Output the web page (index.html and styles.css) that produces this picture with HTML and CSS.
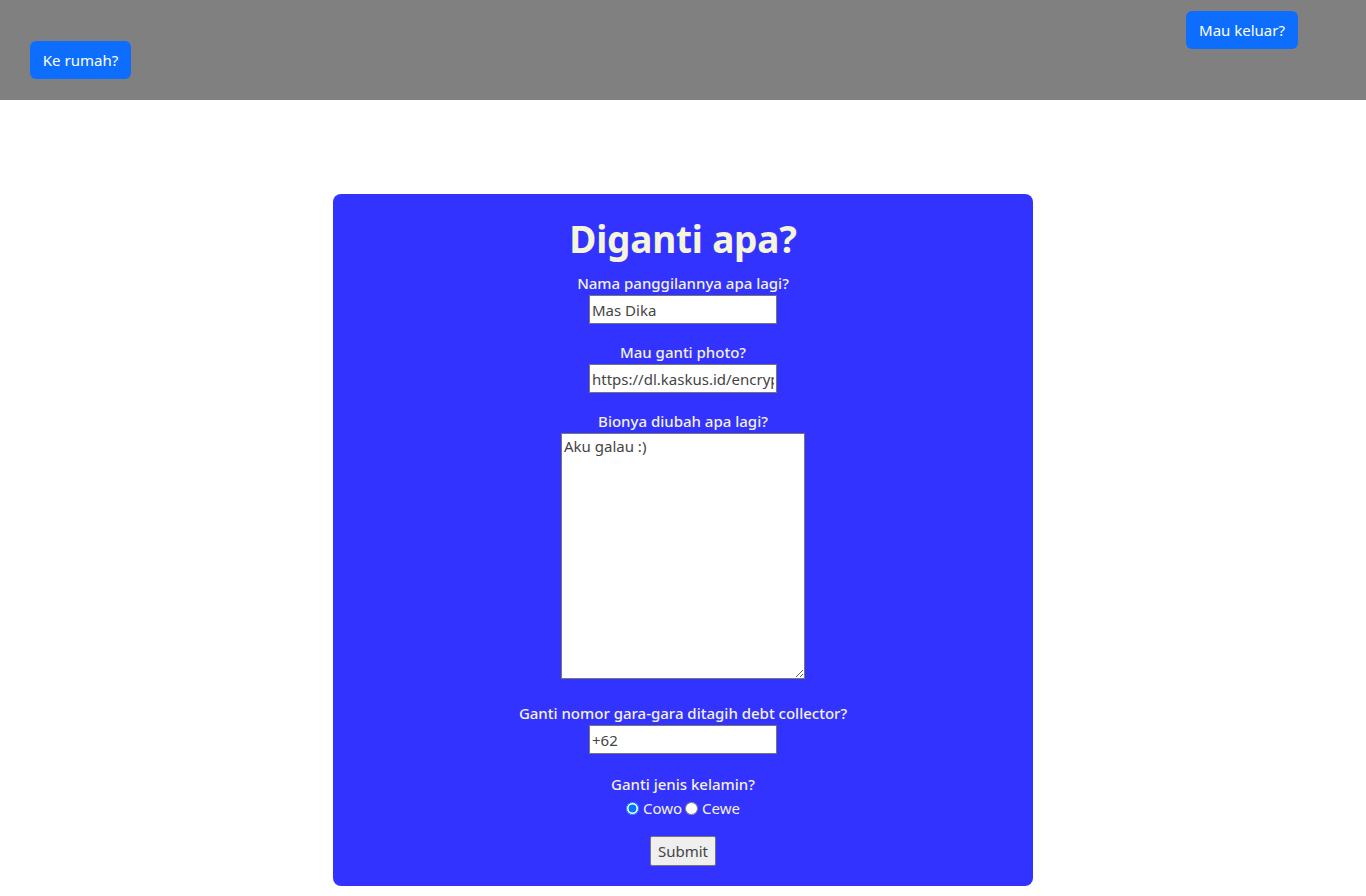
FILE: index.html
```html
<!DOCTYPE html>
<html lang="id">
<head>
<meta charset="utf-8">
<title>Edit Profil</title>
<link rel="stylesheet" href="styles.css">
</head>
<body>
<header class="topbar">
  <a class="btn btn-home" href="#">Ke rumah?</a>
  <a class="btn btn-out" href="#">Mau keluar?</a>
</header>
<main class="page">
  <form class="card">
    <h1 class="title">Diganti apa?</h1>
    <div class="field">
      <label class="lbl" for="nama">Nama panggilannya apa lagi?</label>
      <input class="inp" id="nama" type="text" value="Mas Dika">
    </div>
    <div class="field">
      <label class="lbl" for="photo">Mau ganti photo?</label>
      <input class="inp" id="photo" type="text" value="https://dl.kaskus.id/encrypted-tbn0.gstatic.com/images">
    </div>
    <div class="field field-bio">
      <label class="lbl" for="bio">Bionya diubah apa lagi?</label>
      <textarea class="bio" id="bio">Aku galau :)</textarea>
    </div>
    <div class="field field-phone">
      <label class="lbl" for="nomor">Ganti nomor gara-gara ditagih debt collector?</label>
      <input class="inp" id="nomor" type="text" value="+62">
    </div>
    <div class="field field-radio">
      <span class="lbl">Ganti jenis kelamin?</span>
      <div class="radios">
        <input class="rad" type="radio" name="jk" id="cowo" checked>
        <label for="cowo">Cowo</label>
        <input class="rad" type="radio" name="jk" id="cewe">
        <label for="cewe">Cewe</label>
      </div>
    </div>
    <button class="submit" type="button">Submit</button>
  </form>
</main>
</body>
</html>
```

FILE: styles.css
```css
* { box-sizing: border-box; }
body {
  margin: 0;
  font-family: "Noto Sans", "Open Sans", sans-serif;
  font-size: 15px;
  line-height: 24px;
  background: #fff;
}
.topbar {
  height: 100px;
  background: #808080;
  display: flex;
  justify-content: space-between;
  padding: 11px 68px 21px 30px;
}
.btn {
  display: inline-flex;
  align-items: center;
  justify-content: center;
  height: 38px;
  padding: 0 12px;
  background: #0d6efd;
  color: #fff;
  border-radius: 6px;
  text-decoration: none;
  font-size: 15px;
}
.btn-home { align-self: flex-end; width: 101px; }
.btn-out { align-self: flex-start; width: 112px; }
.page {
  display: flex;
  justify-content: center;
  padding-top: 94px;
}
.card {
  width: 700px;
  height: 692px;
  background: #3333ff;
  border-radius: 8px;
  padding: 21px 20px 20px;
  display: flex;
  flex-direction: column;
  align-items: center;
  color: beige;
}
.title {
  margin: 0 0 8px;
  font-size: 37px;
  line-height: 48px;
  font-weight: 700;
  color: beige;
  letter-spacing: -0.2px;
}
.field {
  display: flex;
  flex-direction: column;
  align-items: center;
  margin-bottom: 16px;
}
.field-bio { margin-bottom: 22px; }
.field-phone { margin-bottom: 18px; }
.field-radio { margin-bottom: 16px; }
.lbl {
  display: block;
  height: 24px;
  font-size: 15px;
  font-weight: 500;
  color: #f4f1e4;
}
.inp {
  width: 188px;
  height: 29px;
  margin: 0;
  padding: 1px 2px;
  border: 1px solid #767676;
  font-family: inherit;
  font-size: 15px;
  color: #444;
  background: #fff;
}
.bio {
  width: 244px;
  height: 246px;
  margin: 0;
  padding: 2px;
  border: 1px solid #767676;
  font-family: inherit;
  font-size: 15px;
  line-height: 20px;
  color: #444;
  resize: both;
}
.radios {
  height: 24px;
  display: flex;
  align-items: center;
  gap: 3px;
  font-size: 15px;
  color: #f4f1e4;
}
.rad { margin: 0 1px 0 0; width: 13px; height: 13px; }
.submit {
  height: 30px;
  width: 66px;
  padding: 0;
  font-family: inherit;
  font-size: 15px;
  color: #444;
  background: #efefef;
  border: 1px solid #767676;
  border-radius: 2px;
}
```
